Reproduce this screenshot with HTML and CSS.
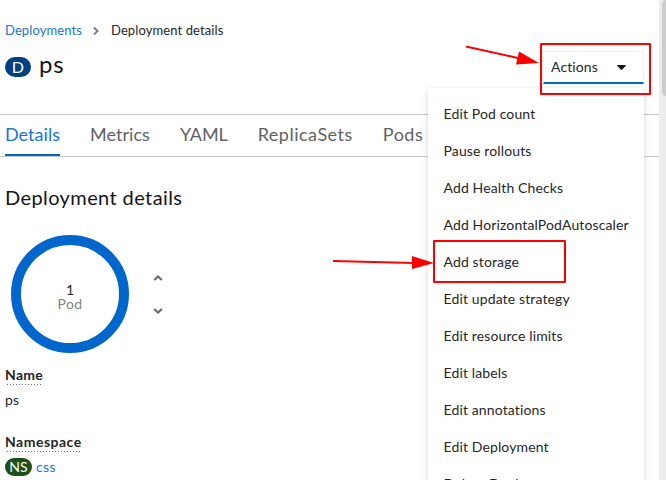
FILE: index.html
```
<!DOCTYPE html>
<html lang="en">
<head>
<meta charset="utf-8">
<title>ps · Deployment details</title>
<link rel="stylesheet" href="styles.css">
</head>
<body>
<main class="page">
  <nav class="breadcrumb">
    <a class="crumb-link">Deployments</a>
    <svg class="crumb-sep" width="6" height="10" viewBox="0 0 6 10"><path d="M1 1.500 4.500 5 1 8.500" fill="none" stroke="#7d8085" stroke-width="2"/></svg>
    <span class="crumb-current">Deployment details</span>
  </nav>
  <header class="title-row">
    <h1 class="title"><span class="badge badge-d">D</span><span class="title-name">ps</span></h1>
    <div class="actions">
      <button class="toggle"><span>Actions</span><svg width="9" height="5" viewBox="0 0 9 5"><path d="M.3 0H8.700Q9 .5 8.600 1L5 4.700Q4.500 5 4 4.700L.4 1Q0 .5.3 0Z" fill="#151515"/></svg></button>
      <ul class="menu">
        <li>Edit Pod count</li>
        <li>Pause rollouts</li>
        <li>Add Health Checks</li>
        <li>Add HorizontalPodAutoscaler</li>
        <li>Add storage</li>
        <li>Edit update strategy</li>
        <li>Edit resource limits</li>
        <li>Edit labels</li>
        <li>Edit annotations</li>
        <li>Edit Deployment</li>
        <li>Delete Deployment</li>
      </ul>
    </div>
  </header>
  <nav class="tabs">
    <a class="tab active">Details</a>
    <a class="tab">Metrics</a>
    <a class="tab yaml">YAML</a>
    <a class="tab replicas">ReplicaSets</a>
    <a class="tab pods-tab">Pods</a>
  </nav>
  <section class="details">
    <h2 class="heading">Deployment details</h2>
    <div class="pods">
      <div class="ring"><span class="count">1</span><span class="unit">Pod</span></div>
      <div class="steppers">
        <svg width="10" height="6" viewBox="0 0 10 6"><path d="M1.200 5 5 1.500 8.800 5" fill="none" stroke="#6a6e73" stroke-width="2.300"/></svg>
        <svg width="10" height="6" viewBox="0 0 10 6"><path d="M1.200 1 5 4.500 8.800 1" fill="none" stroke="#6a6e73" stroke-width="2.300"/></svg>
      </div>
    </div>
    <dl class="fields">
      <dt><span class="term name">Name</span></dt>
      <dd>ps</dd>
      <dt><span class="term namespace">Namespace</span></dt>
      <dd class="ns-row"><span class="badge badge-ns">NS</span><a class="ns-link">css</a></dd>
    </dl>
  </section>
</main>
<aside class="scrollbar"><div class="thumb"></div></aside>
<svg class="annotations" width="666" height="480" viewBox="0 0 666 480">
  <g fill="none" stroke="#f00" stroke-width="2" stroke-linejoin="round">
    <rect x="541" y="44" width="109" height="50"/>
    <rect x="434" y="241" width="131" height="41"/>
    <path d="M466 46.500 520 58.500M333 261 414 263"/>
  </g>
  <path d="M539 63 519 51.500 516 64.500ZM434 263 412 256V269Z" fill="#f00"/>
</svg>
</body>
</html>
```
FILE: styles.css
```
* { box-sizing: border-box; }
body {
  margin: 0;
  height: 480px;
  display: flex;
  overflow: hidden;
  position: relative;
  background: #fff;
  color: #262626;
  font: 14px/20px Lato, "Noto Sans", sans-serif;
  letter-spacing: .13px;
}
h1, h2, ul, dl, dd { margin: 0; padding: 0; font-weight: 400; }
.page { flex: 1; min-width: 0; white-space: nowrap; }
.breadcrumb {
  display: flex;
  align-items: center;
  height: 20px;
  margin-top: 20px;
  padding-left: 5px;
  font-size: 13px;
  letter-spacing: .1px;
}
.crumb-link, .ns-link { color: #1a75d1; }
.crumb-sep { margin: 1px 12px 0 11px; }
.title-row {
  display: flex;
  justify-content: space-between;
  height: 74px;
  padding: 11px 15px 0 5px;
}
.title { display: flex; height: 32px; align-items: center; color: #151515; }
.badge {
  display: flex;
  align-items: center;
  justify-content: center;
  border-radius: 10px;
  color: #fff;
}
.badge-d { width: 26px; height: 20px; padding-bottom: 1px; background: #004080; font-size: 16px; }
.title-name { margin: -6px 0 0 8px; font-size: 24px; line-height: 32px; letter-spacing: .9px; }
.actions { position: relative; width: 101px; }
.toggle {
  display: flex;
  align-items: center;
  justify-content: space-between;
  width: 101px;
  height: 33px;
  padding: 0 17px 0 7px;
  background: #fff;
  border: 1px solid #f0f0f0;
  border-bottom: 2px solid #06c;
  color: #262626;
  font: inherit;
  letter-spacing: .1px;
}
.toggle svg { margin-top: 1px; }
.menu {
  position: absolute;
  z-index: 2;
  top: 37px;
  right: 0;
  width: 216px;
  padding: 7px 0;
  background: #fff;
  box-shadow: 0 4px 8px rgba(3, 3, 3, .12), 0 0 4px rgba(3, 3, 3, .06);
  list-style: none;
}
.menu li { height: 37px; padding-left: 15.5px; line-height: 37px; }
.tabs {
  display: flex;
  gap: 30px;
  height: 43px;
  padding-left: 5px;
  border: solid #c7c7c7;
  border-width: 1px 0;
  color: #5f6266;
  font-size: 18px;
  line-height: 39px;
  letter-spacing: .05px;
}
.tab { height: 41px; }
.active { width: 55px; border-bottom: 2px solid #06c; color: #1a75d1; }
.yaml { letter-spacing: -.1px; }
.replicas { letter-spacing: .5px; }
.pods-tab { letter-spacing: .5px; }
.details { padding-left: 5px; }
.heading { margin-top: 27px; color: #151515; font-size: 20px; line-height: 26px; letter-spacing: .4px; }
.pods { display: flex; align-items: center; height: 118px; margin-top: 25px; padding-left: 6px; }
.ring {
  display: flex;
  flex-direction: column;
  align-items: center;
  justify-content: center;
  width: 118px;
  height: 118px;
  padding-top: 6px;
  border: 10px solid #06c;
  border-radius: 50%;
  line-height: 14px;
}
.unit { color: #808489; letter-spacing: .4px; }
.steppers { display: flex; flex-direction: column; gap: 27px; margin-left: 24px; }
.fields { margin-top: 12px; }
.fields dt { height: 22px; font-weight: 700; }
.term {
  display: inline-block;
  height: 20px;
  background: repeating-linear-gradient(90deg, transparent 0 2px, #6a6e73 2px 3px) left bottom / 100% 1px no-repeat;
}
.name { letter-spacing: .3px; }
.namespace { letter-spacing: .5px; }
.fields dd { height: 20px; margin: 3px 0 22px; }
.fields .ns-row { display: flex; align-items: center; margin: 3px 0 0; }
.badge-ns { width: 27px; height: 18px; margin-right: 4px; background: #1e4f18; }
.ns-link { letter-spacing: .4px; }
.scrollbar { width: 7px; background: #ededeb; padding-left: 3px; }
.thumb { height: 96px; background: #cdcdcd; border-radius: 4px 0 0 4px; }
.annotations { position: absolute; z-index: 3; inset: 0; pointer-events: none; }
```
